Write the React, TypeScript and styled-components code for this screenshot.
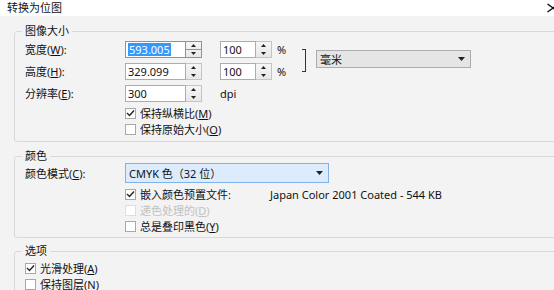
import styled, { createGlobalStyle } from 'styled-components';

const GlobalStyle = createGlobalStyle`
  html, body {
    margin: 0;
    padding: 0;
    background: #f3f3f3;
  }
  body {
    font-family: "Noto Sans", "Noto Sans CJK SC", sans-serif;
    font-size: 11px;
    color: #111;
  }
`;

const Window = styled.div`
  width: 554px;
  height: 290px;
  overflow: hidden;
  background: #f3f3f3;
`;

const TitleBar = styled.div`
  height: 16px;
  background: #fff;
  display: flex;
  align-items: center;
  justify-content: space-between;
  padding-left: 7px;
  font-size: 11px;
  line-height: 16px;
`;

const Close = styled.span`
  display: flex;
  margin-right: -5px;
`;

const Body = styled.div`
  width: 600px;
  padding: 8px 0 0 14px;
`;

const Group = styled.fieldset<{ $top?: number; $pb?: number; $pt?: number }>`
  width: 545px;
  margin: ${p => p.$top ?? 0}px 0 0 0;
  padding: ${p => p.$pt ?? 0}px 0 ${p => p.$pb ?? 0}px 10px;
  border: 1px solid #d9d9d9;
  border-radius: 3px;
  box-sizing: border-box;
`;

const Legend = styled.legend`
  margin-left: -3px;
  padding: 0 3px;
  font-size: 11px;
  line-height: 14px;
`;

const SizeGrid = styled.div`
  display: grid;
  grid-template-columns: 100px 95px 52px 30px 14px 155px;
  grid-template-rows: repeat(3, 17px);
  row-gap: 5px;
  align-items: center;
`;

const Label = styled.span`
  line-height: 17px;
  white-space: nowrap;
`;

const Key = styled.span`
  text-decoration: underline;
`;

const SpinField = styled.div<{ $width: number }>`
  display: flex;
  width: ${p => p.$width}px;
  height: 17px;
`;

const Input = styled.div<{ $focus?: boolean }>`
  flex: 1;
  box-sizing: border-box;
  border: 1px solid ${p => (p.$focus ? '#5a9ee3' : '#acacac')};
  background: #fff;
  padding-left: 2px;
  display: flex;
  align-items: center;
  font-size: 11px;
`;

const Selected = styled.span`
  background: #3399ff;
  color: #fff;
  line-height: 13px;
  padding: 0 1px;
`;

const Spinner = styled.div<{ $focus?: boolean }>`
  width: 16px;
  box-sizing: border-box;
  border: 1px solid ${p => (p.$focus ? '#5a9ee3' : '#c4c4c4')};
  border-left: none;
  background: linear-gradient(#f6f6f6, #e8e8e8);
  display: flex;
  flex-direction: column;
`;

const SpinHalf = styled.div<{ $line?: boolean }>`
  flex: 1;
  display: flex;
  align-items: center;
  justify-content: center;
  border-bottom: ${p => (p.$line ? '1px solid #5a9ee3' : 'none')};
`;

const Unit = styled.span<{ $pad?: number }>`
  padding-left: ${p => p.$pad ?? 0}px;
  line-height: 17px;
`;

const Bracket = styled.div`
  grid-column: 5;
  grid-row: 1 / 3;
  align-self: center;
  width: 4px;
  height: 23px;
  box-sizing: border-box;
  border: 1px solid #333;
  border-left: none;
`;

const Select = styled.div<{ $active?: boolean; $width: number; $height: number }>`
  width: ${p => p.$width}px;
  height: ${p => p.$height}px;
  box-sizing: border-box;
  border: 1px solid ${p => (p.$active ? '#7eb4ea' : '#acacac')};
  background: ${p => (p.$active ? '#dcecfc' : '#e5e5e5')};
  display: flex;
  align-items: center;
  justify-content: space-between;
  padding: 0 5px 0 3px;
  font-size: 11px;
`;

const UnitSelect = styled(Select)`
  grid-column: 6;
  grid-row: 1 / 3;
  align-self: start;
  margin-top: 9px;
`;

const CheckList = styled.div<{ $indent?: number; $top?: number }>`
  display: flex;
  flex-direction: column;
  padding-left: ${p => p.$indent ?? 0}px;
  margin-top: ${p => p.$top ?? 0}px;
`;

const CheckRow = styled.div<{ $disabled?: boolean }>`
  display: flex;
  align-items: center;
  height: 16px;
  gap: 4px;
  line-height: 13px;
  color: ${p => (p.$disabled ? '#c2c2c2' : '#111')};
  white-space: nowrap;
`;

const Box = styled.span<{ $disabled?: boolean }>`
  width: 11px;
  height: 11px;
  box-sizing: border-box;
  border: 1px solid ${p => (p.$disabled ? '#dedede' : '#a8a8a8')};
  background: #fff;
  display: flex;
  align-items: center;
  justify-content: center;
`;

const CheckText = styled.span<{ $width?: number }>`
  width: ${p => (p.$width ? `${p.$width}px` : 'auto')};
`;

const Profile = styled.span`
  color: #111;
`;

const ModeRow = styled.div`
  display: flex;
  align-items: center;
`;

const ModeLabel = styled.span`
  width: 100px;
`;

const UpArrow = () => (
  <svg width="5" height="3" viewBox="0 0 5 3">
    <path d="M0 3 L2.5 0 L5 3 Z" fill="#222" />
  </svg>
);

const DownArrow = ({ w = 5, h = 3 }: { w?: number; h?: number }) => (
  <svg width={w} height={h} viewBox={`0 0 ${w} ${h}`}>
    <path d={`M0 0 L${w / 2} ${h} L${w} 0 Z`} fill="#222" />
  </svg>
);

const Tick = () => (
  <svg width="9" height="8" viewBox="0 0 9 8">
    <path d="M1 4 L3.5 6.5 L8 1.5" fill="none" stroke="#222" strokeWidth="1.4" />
  </svg>
);

const Check = ({ checked, disabled, children, width, extra }: { checked?: boolean; disabled?: boolean; children: React.ReactNode; width?: number; extra?: React.ReactNode }) => (
  <CheckRow $disabled={disabled}>
    <Box $disabled={disabled}>{checked && <Tick />}</Box>
    <CheckText $width={width}>{children}</CheckText>
    {extra}
  </CheckRow>
);

const Spin = ({ value, width, focus }: { value: string; width: number; focus?: boolean }) => (
  <SpinField $width={width}>
    <Input $focus={focus}>{focus ? <Selected>{value}</Selected> : value}</Input>
    <Spinner $focus={focus}>
      <SpinHalf $line={focus}><UpArrow /></SpinHalf>
      <SpinHalf><DownArrow /></SpinHalf>
    </Spinner>
  </SpinField>
);

const App = () => (
  <Window>
    <GlobalStyle />
    <TitleBar>
      <span>转换为位图</span>
      <Close>
        <svg width="12" height="10" viewBox="0 0 12 10">
          <path d="M0.5 1 L11.5 9 M0.5 9 L11.5 1" stroke="#111" strokeWidth="1.4" />
        </svg>
      </Close>
    </TitleBar>
    <Body>
      <Group $pt={3} $pb={4}>
        <Legend>图像大小</Legend>
        <SizeGrid>
          <Label>宽度(<Key>W</Key>):</Label>
          <Spin value="593.005" width={77} focus />
          <Spin value="100" width={52} />
          <Unit $pad={5}>%</Unit>
          <Bracket />
          <UnitSelect $width={155} $height={18}>
            <span>毫米</span>
            <DownArrow w={7} h={4} />
          </UnitSelect>

          <Label>高度(<Key>H</Key>):</Label>
          <Spin value="329.099" width={77} />
          <Spin value="100" width={52} />
          <Unit $pad={5}>%</Unit>

          <Label>分辨率(<Key>E</Key>):</Label>
          <Spin value="300" width={77} />
          <Unit>dpi</Unit>
        </SizeGrid>
        <CheckList $indent={100} $top={3}>
          <Check checked>保持纵横比(<Key>M</Key>)</Check>
          <Check>保持原始大小(<Key>O</Key>)</Check>
        </CheckList>
      </Group>

      <Group $top={7} $pb={3}>
        <Legend>颜色</Legend>
        <ModeRow>
          <ModeLabel>颜色模式(<Key>C</Key>):</ModeLabel>
          <Select $active $width={204} $height={20}>
            <span>CMYK 色（32 位）</span>
            <DownArrow w={7} h={4} />
          </Select>
        </ModeRow>
        <CheckList $indent={100} $top={3}>
          <Check checked width={126} extra={<Profile>Japan Color 2001 Coated - 544 KB</Profile>}>
            嵌入颜色预置文件:
          </Check>
          <Check disabled>递色处理的(<Key>D</Key>)</Check>
          <Check>总是叠印黑色(<Key>Y</Key>)</Check>
        </CheckList>
      </Group>

      <Group $top={6} $pt={2}>
        <Legend>选项</Legend>
        <CheckList>
          <Check checked>光滑处理(<Key>A</Key>)</Check>
          <Check>保持图层(<Key>N</Key>)</Check>
        </CheckList>
      </Group>
    </Body>
  </Window>
);

export default App;
